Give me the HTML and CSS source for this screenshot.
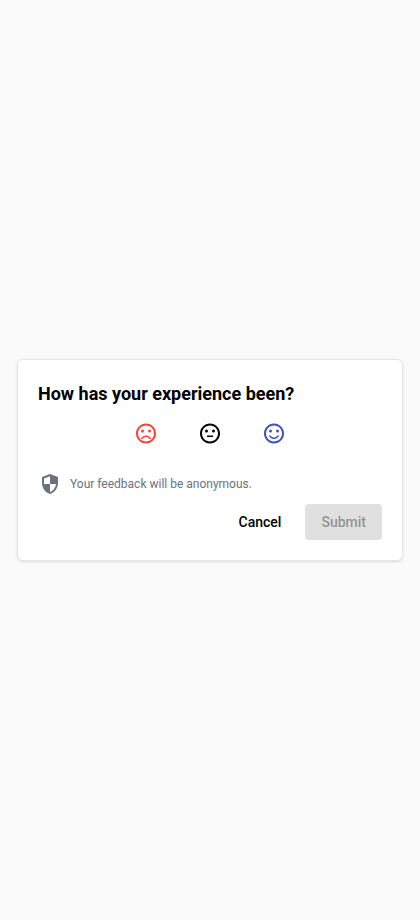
FILE: index.html
```html
<!DOCTYPE html>
<html lang="en">
<head>
<meta charset="utf-8">
<title>Feedback</title>
<link rel="stylesheet" href="styles.css">
</head>
<body>
<main class="card">
  <h1 class="title">How has your experience been?</h1>
  <div class="ratings">
    <button class="rating bad" aria-label="Bad"><svg viewBox="0 0.5 24 24"><circle cx="15.5" cy="9.5" r="1.5"/><circle cx="8.5" cy="9.5" r="1.5"/><path d="M12 14c-2.33 0-4.32 1.45-5.12 3.5h1.67c.69-1.19 1.97-2 3.45-2s2.75.81 3.45 2h1.67c-.8-2.05-2.79-3.5-5.12-3.5zm-.01-12C6.47 2 2 6.48 2 12s4.47 10 9.99 10C17.52 22 22 17.52 22 12S17.52 2 11.99 2zM12 20c-4.42 0-8-3.58-8-8s3.58-8 8-8 8 3.58 8 8-3.58 8-8 8z"/></svg></button>
    <button class="rating" aria-label="Neutral"><svg viewBox="0 0.5 24 24"><path d="M9 14h6v1.5H9z"/><circle cx="15.5" cy="9.5" r="1.5"/><circle cx="8.5" cy="9.5" r="1.5"/><path d="M11.99 2C6.47 2 2 6.48 2 12s4.47 10 9.99 10C17.52 22 22 17.52 22 12S17.52 2 11.99 2zM12 20c-4.42 0-8-3.58-8-8s3.58-8 8-8 8 3.58 8 8-3.58 8-8 8z"/></svg></button>
    <button class="rating good" aria-label="Good"><svg viewBox="0 0.5 24 24"><circle cx="15.5" cy="9.5" r="1.5"/><circle cx="8.5" cy="9.5" r="1.5"/><path d="M12 16c-1.48 0-2.75-.81-3.45-2H6.88c.8 2.05 2.79 3.5 5.12 3.5s4.32-1.45 5.12-3.5h-1.67c-.7 1.19-1.97 2-3.45 2zm-.01-14C6.47 2 2 6.48 2 12s4.47 10 9.99 10C17.52 22 22 17.52 22 12S17.52 2 11.99 2zM12 20c-4.42 0-8-3.58-8-8s3.58-8 8-8 8 3.58 8 8-3.58 8-8 8z"/></svg></button>
  </div>
  <div class="notice">
    <svg viewBox="0 0 24 24"><path d="M12 2L4 5v6.09c0 5.05 3.41 9.76 8 10.91 4.59-1.15 8-5.86 8-10.91V5l-8-3zm6 10c-.45 3.7-2.88 6.9-6 7.92V12H6V6.39l6-2.25V12h6z"/></svg>
    <span>Your feedback will be anonymous.</span>
  </div>
  <div class="actions">
    <button class="btn">Cancel</button>
    <button class="btn submit" disabled>Submit</button>
  </div>
</main>
</body>
</html>
```
FILE: styles.css
```css
* { box-sizing: border-box; }
body {
  margin: 0;
  min-height: 100vh;
  display: flex;
  align-items: center;
  justify-content: center;
  background: #fafafa;
  color: #000;
  font-family: Roboto, sans-serif;
}
.card {
  width: 386px;
  height: 202px;
  padding: 20px;
  background: #fff;
  border: 1px solid #e5e7eb;
  border-radius: 6px;
  box-shadow: 0 1px 3px rgba(0, 0, 0, .1), 0 1px 2px -1px rgba(0, 0, 0, .1);
}
.title {
  margin: 0;
  font-size: 18px;
  line-height: 28px;
  font-weight: 700;
}
button {
  border: 0;
  background: none;
  font-family: inherit;
  color: inherit;
}
svg { display: block; width: 24px; height: 24px; fill: currentColor; }
.ratings {
  display: flex;
  justify-content: center;
  gap: 24px;
  margin-top: 6px;
}
.rating { width: 40px; height: 40px; padding: 8px; }
.bad { color: #f44336; }
.good { color: #3f51b5; }
.notice {
  display: flex;
  align-items: center;
  gap: 8px;
  margin-top: 18px;
  color: #6b7280;
  font-size: 12px;
  line-height: 16px;
}
.actions {
  display: flex;
  justify-content: flex-end;
  gap: 8px;
  margin-top: 8px;
}
.btn {
  height: 36px;
  padding: 0 16px;
  border-radius: 4px;
  font-size: 14px;
  line-height: 36px;
  font-weight: 500;
}
.submit { background: #e0e0e0; color: #949494; }
```
